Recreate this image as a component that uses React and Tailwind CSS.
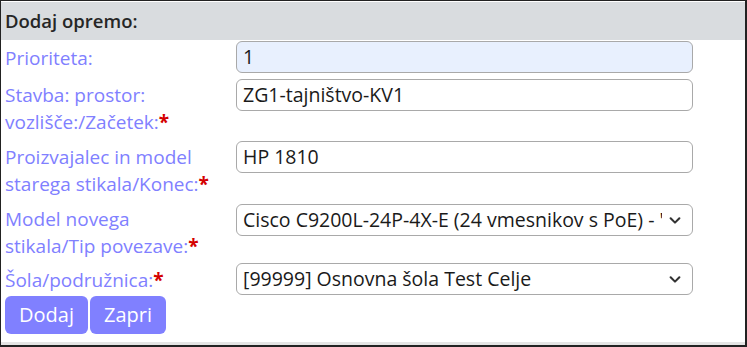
const ROWS = [
  { label: 'Prioriteta:', value: '1', kind: 'input', filled: true, pad: 'pt-[5px]', pb: 'pb-[5px]' },
  { label: 'Stavba: prostor: vozlišče:/Začetek:', req: true, value: 'ZG1-tajništvo-KV1', kind: 'input', pad: 'pt-[4px]', pb: 'pb-[4px]' },
  { label: 'Proizvajalec in model starega stikala/Konec:', req: true, value: 'HP 1810', kind: 'input', pad: 'pt-[4px]', pb: 'pb-[5px]' },
  { label: 'Model novega stikala/Tip povezave:', req: true, value: "Cisco C9200L-24P-4X-E (24 vmesnikov s PoE) - '", kind: 'select', pad: 'pt-[3px]', pb: 'pb-[2px]' },
  { label: 'Šola/podružnica:', req: true, value: '[99999] Osnovna šola Test Celje', kind: 'select', pad: 'pt-[5px]', pb: 'pb-[1px]' },
];

function Chevron() {
  return (
    <svg width="14" height="14" viewBox="0 0 16 16" className="shrink-0 ml-[6px]">
      <path d="M3 6l5 5 5-5" fill="none" stroke="#333" strokeWidth="2.4" strokeLinecap="round" strokeLinejoin="round" />
    </svg>
  );
}

function Field({ row }) {
  const base = 'mt-[1px] h-[32px] w-[457px] shrink-0 rounded-[6px] border border-[#a9a9a9] flex items-center pl-[6px] text-[19.5px] text-[#1a1a1a] overflow-hidden';
  if (row.kind === 'select') {
    return (
      <div className={base + ' bg-white pr-[10px]'}>
        <span className="flex-1 whitespace-nowrap overflow-hidden">{row.value}</span>
        <Chevron />
      </div>
    );
  }
  return (
    <div className={base + (row.filled ? ' bg-[#e8f0fe]' : ' bg-white')}>
      <span className="whitespace-nowrap">{row.value}</span>
    </div>
  );
}

export default function App() {
  return (
    <div
      className="w-[747px] h-[347px] bg-white border-t border-l border-[#222] border-r-2 border-r-[#222] border-b-2 border-b-[#222] overflow-hidden"
      style={{ fontFamily: '"Open Sans", sans-serif' }}
    >
      <div className="h-full border-b-[3px] border-[#e4e4e4] pt-[1px] flex flex-col">
        <div className="h-[38px] shrink-0 bg-[#d9dcdf] flex items-center pl-[4px] text-[18.5px] font-semibold text-[#262626]">
          Dodaj opremo:
        </div>
        <div className="flex flex-col">
          {ROWS.map((r, i) => (
            <div key={i} className={'flex items-start ' + r.pb}>
              <div className={'w-[235px] shrink-0 pl-[4px] pr-[13px] text-[19px] leading-[27px] text-[#8080ff] ' + r.pad}>
                {r.label}
                {r.req && <span className="text-[#d40000] font-bold">*</span>}
              </div>
              <Field row={r} />
            </div>
          ))}
        </div>
        <div className="flex gap-[2px] pl-[4px]">
          <button className="h-[38px] px-[14px] rounded-[6px] bg-[#8080ff] text-white text-[20px]">Dodaj</button>
          <button className="h-[38px] px-[14px] rounded-[6px] bg-[#8080ff] text-white text-[20px]">Zapri</button>
        </div>
      </div>
    </div>
  );
}
